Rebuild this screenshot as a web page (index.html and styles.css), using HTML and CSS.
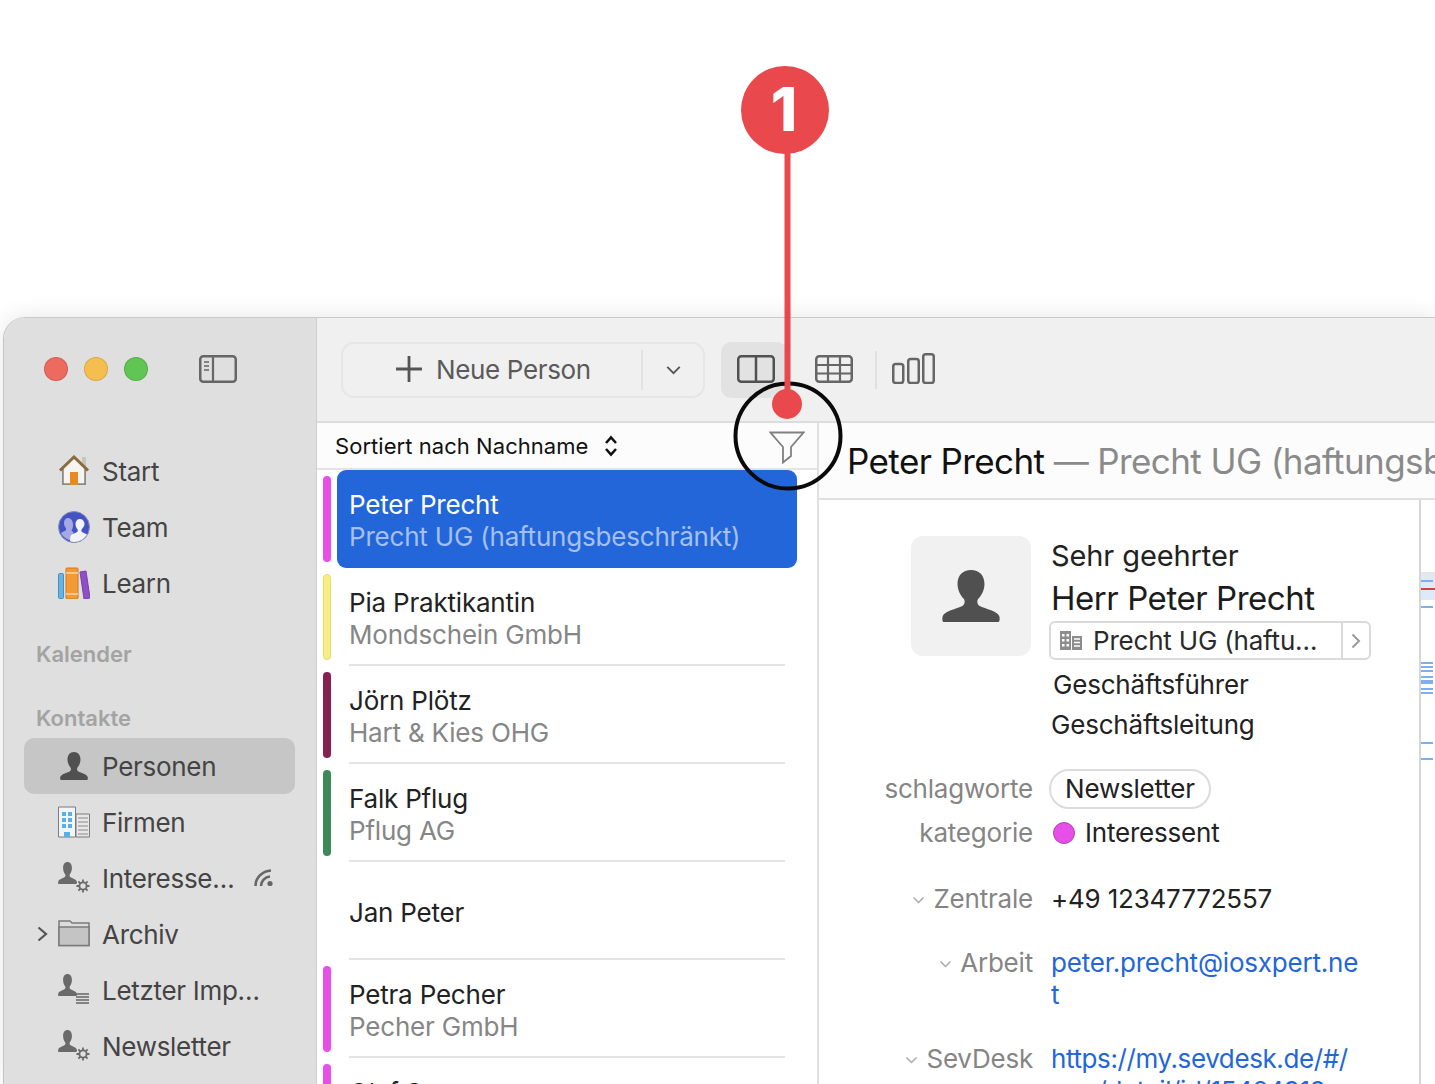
FILE: index.html
```html
<!DOCTYPE html>
<html lang="de">
<head>
<meta charset="utf-8">
<title>Personen</title>
<link rel="stylesheet" href="styles.css">
</head>
<body>
<svg class="defs" width="0" height="0">
  <symbol id="person" viewBox="0 0 28 28" preserveAspectRatio="none">
    <path d="M14 0c-4 0-6.500 3-6.500 7.500 0 3 1.300 6 3 8 .7 1 .6 3-.5 3.700C7 21 1 22 .3 25c-.2 1-.3 3 .7 3h26c1 0 .9-2 .7-3-.7-3-6.700-4-9.700-5.800-1.100-.7-1.200-2.700-.5-3.700 1.700-2 3-5 3-8C20.500 3 18 0 14 0z"/>
  </symbol>
  <symbol id="gear" viewBox="0 0 14 14">
    <circle cx="7" cy="7" r="3.600" fill="none" stroke="currentColor" stroke-width="1.800"/>
    <path d="M7 .5v2.600M7 10.900v2.600M.5 7h2.600M10.900 7h2.600M2.400 2.400l1.900 1.900M9.700 9.700l1.900 1.900M11.600 2.400L9.700 4.300M4.300 9.700l-1.900 1.900" stroke="currentColor" stroke-width="1.800" fill="none"/>
  </symbol>
  <symbol id="chev" viewBox="0 0 12 8">
    <path d="M1 1.500l5 5 5-5" fill="none" stroke="currentColor" stroke-width="1.500"/>
  </symbol>
</svg>

<div class="window">
  <aside class="sidebar">
    <div class="titlebar">
      <span class="light red"></span><span class="light yellow"></span><span class="light green"></span>
      <svg class="side-toggle" viewBox="0 0 38 28"><rect x="1.250" y="1.250" width="35.500" height="25.500" rx="3" fill="none" stroke="#666" stroke-width="2.500"/><path d="M14 1v26" stroke="#666" stroke-width="2.200"/><path d="M5 7h5M5 11h5M5 15h5" stroke="#666" stroke-width="1.600"/></svg>
    </div>
    <nav class="top-nav">
      <div class="nav-item"><span class="slot"></span>
        <svg class="nav-icon" viewBox="0 0 32 32"><path d="M24 2h4v12l-4-3z" fill="#c9c4bc"/><path d="M5 13L16 3l11 10v17H5z" fill="#f6f4f0"/><path d="M4 30V14h1.800v14.200h20.400V14H28v16z" fill="#8a8a8a"/><path d="M12 17h8v13h-8z" fill="#e58a25"/><path d="M2 15.500L16 2l14 13.500" fill="none" stroke="#8b6a3e" stroke-width="3"/></svg>
        <span class="nav-label">Start</span></div>
      <div class="nav-item"><span class="slot"></span>
        <svg class="nav-icon" viewBox="0 0 32 32"><circle cx="16" cy="16" r="15.500" fill="#4453c4" stroke="#8b8fb5" stroke-width="1"/><path d="M10 7c-2.500 0-4 2-4 5 0 2 .8 3.800 1.800 5 .5.700.4 2-.3 2.400-1.500.9-3.500 1.600-4.500 2.600 2 4 6 7 11 7.500 1-2 2-6 1.500-8-.4-.8-1.500-1.400-2-2 1-1.400 1.500-3.200 1.500-5.500C15 9 12.500 7 10 7z" fill="#a5a9e3"/><path d="M22 8c-2.700 0-4.500 2-4.500 5 0 2.200.9 4 2 5.300.5.700.4 2.200-.3 2.700-2 1.200-5 2-6.700 3.700L12 30c1.300.6 2.600 1 4 1 5.500 0 10.500-3 13-7.500-1.500-1-3.500-1.800-5-2.500-.7-.5-.8-2-.3-2.700 1.100-1.300 2.800-3 2.800-5.300 0-3-2-5-4.500-5z" fill="#f4f4f6"/></svg>
        <span class="nav-label">Team</span></div>
      <div class="nav-item"><span class="slot"></span>
        <svg class="nav-icon" viewBox="0 0 32 32"><rect x="0.500" y="6.500" width="5" height="25" rx="1" fill="#62b5e5" stroke="#4b8fc0"/><rect x="8" y="1" width="12" height="31" rx="1" fill="#f39a34" stroke="#c97a22"/><path d="M8 6h12M8 27h12" stroke="#f8d9a8" stroke-width="1.500"/><path d="M22 5l6-1 4 27-6 1z" fill="#8f4fc9" stroke="#7a3fb0"/></svg>
        <span class="nav-label">Learn</span></div>
    </nav>

    <div class="section first">Kalender</div>
    <div class="section second">Kontakte</div>

    <nav class="contacts-nav">
      <div class="nav-item selected"><span class="slot"></span>
        <span class="nav-icon composite"><svg class="person-main"><use href="#person"/></svg></span>
        <span class="nav-label">Personen</span></div>
      <div class="nav-item"><span class="slot"></span>
        <svg class="nav-icon" viewBox="0 0 32 32"><path d="M.5 1h17v30H.5z" fill="#f2f5f8" stroke="#7b7b7b"/><path d="M18 8h13.500v23H18z" fill="#e7e7e7" stroke="#7b7b7b"/><path d="M4 6h4v4H4zM10 6h4v4h-4zM4 12h4v4H4zM10 12h4v4h-4zM4 18h4v4H4zM10 18h4v4h-4z" fill="#58b0ea"/><path d="M6 26h6v5H6z" fill="#58b0ea"/><path d="M20 12h10M20 16h10M20 20h10M20 24h10M20 28h10" stroke="#a9a9a9" stroke-width="1.500"/></svg>
        <span class="nav-label">Firmen</span></div>
      <div class="nav-item"><span class="slot"></span>
        <span class="nav-icon composite"><svg class="mini-person"><use href="#person"/></svg><svg class="mini-gear"><use href="#gear"/></svg></span>
        <span class="nav-label">Interesse…</span>
        <svg class="feed" viewBox="0 0 20 18"><circle cx="16" cy="14.500" r="2.600" fill="#666"/><path d="M1.500 17C1.500 9 8 2 17 1.500M7 17c0-5 4-9 9-9.500" fill="none" stroke="#666" stroke-width="2.600"/></svg></div>
      <div class="nav-item"><span class="slot"><svg class="disclosure" viewBox="0 0 11 16"><path d="M1.500 1.500L9 8l-7.500 6.500" fill="none" stroke="#555" stroke-width="2.200"/></svg></span>
        <svg class="nav-icon" viewBox="0 0 32 32"><path d="M1 27.500V3h11l2 2h17v22.500z" fill="#dcdcdc" stroke="#7b7b7b" stroke-width="1.500"/><path d="M1 9h30v18.500H1z" fill="#c4c4c4" stroke="#7b7b7b" stroke-width="1.500"/></svg>
        <span class="nav-label">Archiv</span></div>
      <div class="nav-item"><span class="slot"></span>
        <span class="nav-icon composite"><svg class="mini-person"><use href="#person"/></svg><svg class="mini-list" viewBox="0 0 13 11"><path d="M0 1h13M0 4h13M0 7h13M0 10h13" stroke="#666" stroke-width="1.300"/></svg></span>
        <span class="nav-label">Letzter Imp…</span></div>
      <div class="nav-item"><span class="slot"></span>
        <span class="nav-icon composite"><svg class="mini-person"><use href="#person"/></svg><svg class="mini-gear"><use href="#gear"/></svg></span>
        <span class="nav-label">Newsletter</span></div>
    </nav>
  </aside>

  <div class="main">
    <header class="toolbar">
      <div class="split">
        <div class="split-main">
          <svg class="plus" viewBox="0 0 28 28"><path d="M14 1v26M1 14h26" stroke="#555" stroke-width="2.800"/></svg>
          <span>Neue Person</span>
        </div>
        <div class="split-arrow"><svg class="split-chev"><use href="#chev"/></svg></div>
      </div>
      <div class="view-active">
        <svg class="view-icon" viewBox="0 0 38 28"><rect x="1.250" y="1.250" width="35.500" height="25.500" rx="3" fill="none" stroke="#505050" stroke-width="2.500"/><path d="M19 1v26" stroke="#505050" stroke-width="2.500"/></svg>
      </div>
      <svg class="view-icon grid-icon" viewBox="0 0 38 28"><rect x="1.250" y="1.250" width="35.500" height="25.500" rx="3" fill="none" stroke="#666" stroke-width="2.500"/><path d="M1 10h36M1 18.500h36M13 1v26M25 1v26" stroke="#666" stroke-width="2.200"/></svg>
      <span class="tool-sep"></span>
      <svg class="bars-icon" viewBox="0 0 43 31"><rect x="1.250" y="11" width="10" height="19" rx="2.500" fill="none" stroke="#666" stroke-width="2.500"/><rect x="16.250" y="6" width="10.500" height="24" rx="2.500" fill="none" stroke="#666" stroke-width="2.500"/><rect x="31.250" y="1.250" width="10.500" height="28.750" rx="2.500" fill="none" stroke="#666" stroke-width="2.500"/></svg>
    </header>

    <div class="content">
      <section class="list">
        <div class="sortbar">
          <span class="sort-text">Sortiert nach Nachname</span>
          <svg class="updown" viewBox="0 0 14 22"><path d="M2 8l5-5.500L12 8M2 14l5 5.500 5-5.500" fill="none" stroke="#111" stroke-width="2.600"/></svg>
          <svg class="filter" viewBox="0 0 36 33"><path d="M1.500 1.500h33L22 16v9l-8 6.500V16z" fill="none" stroke="#808080" stroke-width="1.800"/></svg>
        </div>

        <div class="row active">
          <span class="stripe pink"></span>
          <div class="card"><div class="row-name">Peter Precht</div><div class="row-company">Precht UG (haftungsbeschränkt)</div></div>
        </div>
        <div class="row">
          <span class="stripe yellow-s"></span>
          <div class="card"><div class="row-name">Pia Praktikantin</div><div class="row-company">Mondschein GmbH</div></div>
        </div>
        <div class="row">
          <span class="stripe wine"></span>
          <div class="card"><div class="row-name">Jörn Plötz</div><div class="row-company">Hart &amp; Kies OHG</div></div>
        </div>
        <div class="row">
          <span class="stripe forest"></span>
          <div class="card"><div class="row-name">Falk Pflug</div><div class="row-company">Pflug AG</div></div>
        </div>
        <div class="row">
          <span class="stripe none"></span>
          <div class="card single"><div class="row-name">Jan Peter</div></div>
        </div>
        <div class="row">
          <span class="stripe pink"></span>
          <div class="card"><div class="row-name">Petra Pecher</div><div class="row-company">Pecher GmbH</div></div>
        </div>
        <div class="row">
          <span class="stripe pink"></span>
          <div class="card"><div class="row-name">Olaf Sommer</div><div class="row-company">Sommer KG</div></div>
        </div>
      </section>

      <section class="detail">
        <div class="detail-title"><span class="title-name">Peter Precht</span> <span class="title-rest">— Precht UG (haftungsbeschränkt)</span></div>
        <div class="detail-body">
          <div class="detail-scroll">
            <div class="profile">
              <div class="avatar"><svg class="avatar-person"><use href="#person"/></svg></div>
              <div class="profile-text">
                <div class="salutation">Sehr geehrter</div>
                <div class="fullname">Herr Peter Precht</div>
                <div class="company-box">
                  <div class="company-main">
                    <svg class="company-icon" viewBox="0 0 22 19"><path d="M0 0h11v19H0z" fill="#8d8d8d"/><path d="M2 3h2.500v2.500H2zM6.500 3H9v2.500H6.500zM2 8h2.500v2.500H2zM6.500 8H9v2.500H6.500zM2 13h2.500v2.500H2zM6.500 13H9v2.500H6.500z" fill="#fff"/><path d="M12 5h10v14H12z" fill="#8d8d8d"/><path d="M14 8h6M14 11.500h6M14 15h6" stroke="#fff" stroke-width="1.500"/></svg>
                    <span>Precht UG (haftu…</span>
                  </div>
                  <div class="company-go"><svg viewBox="0 0 10 16"><path d="M1.500 1.500L8 8l-6.500 6.500" fill="none" stroke="#999" stroke-width="2"/></svg></div>
                </div>
                <div class="jobtitle">Geschäftsführer</div>
                <div class="department">Geschäftsleitung</div>
              </div>
            </div>

            <div class="field tags">
              <div class="label">schlagworte</div>
              <div class="value"><span class="chip">Newsletter</span></div>
            </div>
            <div class="field cat">
              <div class="label">kategorie</div>
              <div class="value cat-value"><span class="cat-dot"></span>Interessent</div>
            </div>
            <div class="field phone">
              <div class="label"><svg class="label-chev"><use href="#chev"/></svg>Zentrale</div>
              <div class="value">+49 12347772557</div>
            </div>
            <div class="field mail">
              <div class="label"><svg class="label-chev"><use href="#chev"/></svg>Arbeit</div>
              <div class="value link">peter.precht@iosxpert.ne<br>t</div>
            </div>
            <div class="field web">
              <div class="label"><svg class="label-chev"><use href="#chev"/></svg>SevDesk</div>
              <div class="value link url">https://my.sevdesk.de/#/<br>crm/detail/id/15424919</div>
            </div>
          </div>
          <div class="minimap">
            <div class="mini-range"><i class="mark blue m8"></i><i class="mark red-m"></i></div>
            <i class="mark blue m6"></i>
            <i class="mark blue m54"></i>
            <i class="mark blue m2"></i>
            <i class="mark blue m2"></i>
            <i class="mark blue m4"></i>
            <i class="mark blue thick m2"></i>
            <i class="mark blue m4"></i>
            <i class="mark blue m2"></i>
            <i class="mark blue m48"></i>
            <i class="mark blue m14"></i>
          </div>
        </div>
      </section>
    </div>
  </div>
</div>

<svg class="annotation" viewBox="0 0 1435 1084" width="1435" height="1084">
  <circle cx="788" cy="436" r="52.500" fill="none" stroke="#0a0a0a" stroke-width="4"/>
  <rect x="784.500" y="150" width="6" height="250" fill="#e9484d"/>
  <circle cx="785" cy="110" r="44" fill="#e9484d"/>
  <circle cx="787" cy="404" r="15" fill="#e9484d"/>
  <text class="badge-num" x="784" y="131" text-anchor="middle">1</text>
</svg>
</body>
</html>
```

FILE: styles.css
```css
* { box-sizing: border-box; }

html, body {
  margin: 0;
  padding: 0;
  width: 1435px;
  height: 1084px;
  overflow: hidden;
  background: #fff;
}

body {
  position: relative;
  font-family: Inter, "Liberation Sans", sans-serif;
  padding: 317px 0 0 3px;
}

.defs { position: absolute; }

.window {
  display: flex;
  width: 1432px;
  height: 767px;
  overflow: hidden;
  border-top-left-radius: 22px;
  border-top: 1px solid #c9c9c9;
  border-left: 1px solid #c4c4c4;
  box-shadow: 0 -2px 22px rgba(0, 0, 0, .09);
  background: #fff;
  clip-path: inset(-30px 0 0 -3px round 22px 0 0 0);
}

/* Sidebar */
.sidebar {
  flex: 0 0 313px;
  background: #dfdfdf;
  border-right: 1px solid #cfcfcf;
  color: #444;
}

.titlebar {
  display: flex;
  align-items: center;
  height: 125px;
  padding: 0 0 23px 40px;
  gap: 16px;
}

.light { width: 24px; height: 24px; border-radius: 50%; border: 1px solid rgba(0, 0, 0, .12); }
.red { background: #ed6a5e; }
.yellow { background: #f5bf4f; }
.green { background: #61c554; }

.side-toggle { width: 38px; height: 28px; margin-left: 35px; }

.nav-item {
  display: flex;
  align-items: center;
  width: 271px;
  height: 56px;
  margin-left: 20px;
  border-radius: 10px;
}

.nav-item.selected { background: #c6c6c6; }

.slot {
  flex: 0 0 34px;
  display: flex;
  align-items: center;
  padding-left: 13px;
}

.disclosure { width: 11px; height: 16px; }

.nav-icon {
  flex: 0 0 32px;
  width: 32px;
  height: 32px;
  fill: #666;
  color: #666;
}

.composite { position: relative; display: block; }
.person-main { position: absolute; left: 2px; top: 2px; width: 28px; height: 28px; fill: #505050; }
.mini-person { position: absolute; left: 0; top: 0; width: 19px; height: 22px; fill: #6a6a6a; }
.mini-gear { position: absolute; right: 0; bottom: 1px; width: 14px; height: 14px; color: #6a6a6a; }
.mini-list { position: absolute; right: 1px; bottom: 2px; width: 13px; height: 11px; }

.nav-label {
  margin-left: 12px;
  margin-top: 1px;
  font-size: 26px;
  line-height: 32px;
  letter-spacing: -.3px;
  color: #444;
  white-space: nowrap;
}

.contacts-nav .nav-label { margin-top: 2px; }

.feed { width: 20px; height: 18px; margin-left: auto; margin-right: 21px; }

.section {
  margin-left: 32px;
  font-size: 22px;
  line-height: 30px;
  font-weight: 600;
  color: #a3a3a3;
}
.section.first { margin-top: 28px; }
.section.second { margin-top: 34px; margin-bottom: 5px; }

/* Main */
.main {
  flex: 1;
  min-width: 0;
  display: flex;
  flex-direction: column;
}

.toolbar {
  display: flex;
  align-items: center;
  flex: 0 0 105px;
  padding: 0 0 0 24px;
  background: #f0f0f0;
  border-bottom: 2px solid #dcdcdc;
}

.split {
  display: flex;
  align-items: stretch;
  width: 364px;
  height: 56px;
  margin-top: 1px;
  border: 2px solid #e6e6e6;
  border-radius: 13px;
}

.split-main {
  flex: 1;
  display: flex;
  align-items: center;
  padding: 0 0 2px 52px;
  gap: 13px;
  font-size: 26px;
  letter-spacing: -.35px;
  color: #5a5a5a;
}

.plus { width: 28px; height: 28px; }

.split-arrow {
  flex: 0 0 62px;
  display: flex;
  align-items: center;
  justify-content: center;
  margin: 6px 0;
  border-left: 2px solid #e3e3e3;
}

.split-chev { width: 15px; height: 10px; color: #555; }

.view-active {
  display: flex;
  align-items: center;
  width: 66px;
  height: 56px;
  margin-left: 16px;
  padding-left: 16px;
  background: #e2e2e2;
  border-radius: 10px;
}

.view-icon { flex: 0 0 38px; width: 38px; height: 28px; margin-top: -1px; }
.grid-icon { margin-left: 28px; }
.tool-sep { width: 2px; height: 38px; margin-left: 22px; background: #e0e0e0; }
.bars-icon { width: 43px; height: 31px; margin-left: 15px; margin-top: -3px; }

.content { flex: 1; min-height: 0; display: flex; }

/* List */
.list {
  flex: 0 0 502px;
  border-right: 2px solid #e0e0e0;
  background: #fff;
  overflow: hidden;
}

.sortbar {
  display: flex;
  align-items: center;
  height: 47px;
  padding-left: 18px;
  background: #fcfcfc;
  border-bottom: 2px solid #e4e4e4;
  font-size: 22px;
  color: #111;
}

.sort-text { letter-spacing: .05px; }

.updown { width: 14px; height: 22px; margin-left: 16px; }
.filter { width: 36px; height: 33px; margin-left: auto; margin-right: 12px; margin-top: 3px; }

.row { display: flex; height: 98px; }

.stripe {
  flex: 0 0 8px;
  height: 86px;
  margin: 6px 0 0 6px;
  border-radius: 4px;
}
.pink { background: #e84fe8; }
.yellow-s { background: #f7ef84; border: 1px solid #e6dd6a; }
.wine { background: #86214f; }
.forest { background: #3c8a57; }
.none { background: transparent; }

.card {
  width: 436px;
  height: 98px;
  margin-left: 18px;
  padding-top: 19px;
  border-bottom: 2px solid #e4e4e4;
}

.card.single { padding-top: 35px; }

.row.active .card {
  width: 460px;
  margin-left: 6px;
  padding-left: 12px;
  background: #2366d9;
  border-bottom: 0;
  border-radius: 9px;
}

.row-name { font-size: 26px; line-height: 32px; letter-spacing: -.2px; color: #222; white-space: nowrap; }
.row-company { font-size: 26px; line-height: 32px; letter-spacing: -.2px; color: #868686; white-space: nowrap; }
.active .row-name { color: #fff; }
.active .row-company { color: #a5c0f0; }

/* Detail */
.detail { flex: 1; min-width: 0; display: flex; flex-direction: column; overflow: hidden; }

.detail-title {
  flex: 0 0 77px;
  padding: 16px 0 0 28px;
  background: #fcfcfc;
  border-bottom: 2px solid #e0e0e0;
  font-size: 35px;
  line-height: 44px;
  letter-spacing: -.6px;
  white-space: nowrap;
}
.title-name { color: #111; }
.title-rest { color: #8a8a8a; }

.detail-body { flex: 1; min-height: 0; display: flex; }

.detail-scroll {
  flex: 0 0 602px;
  height: 600px;
  border-right: 2px solid #d6d6d6;
  overflow: hidden;
}

.profile { display: flex; padding: 36px 0 0 92px; }

.avatar {
  display: flex;
  align-items: center;
  justify-content: center;
  flex: 0 0 120px;
  height: 120px;
  background: #f1f1f1;
  border-radius: 12px;
}

.avatar-person { width: 58px; height: 52px; fill: #505050; }

.profile-text { margin-left: 18px; color: #222; }

.salutation { height: 42px; padding-left: 2px; font-size: 29px; line-height: 40px; letter-spacing: -.1px; }
.fullname { height: 43px; padding-left: 2px; font-size: 33px; line-height: 40px; letter-spacing: -.45px; color: #1c1c1c; white-space: nowrap; }

.company-box {
  display: flex;
  width: 322px;
  height: 39px;
  border: 2px solid #dadada;
  border-radius: 6px;
  font-size: 26px;
  letter-spacing: -.2px;
  color: #2a2a2a;
}

.company-main {
  flex: 1;
  display: flex;
  align-items: center;
  gap: 11px;
  padding-left: 9px;
  white-space: nowrap;
}

.company-icon { width: 22px; height: 19px; }

.company-go {
  flex: 0 0 28px;
  display: flex;
  align-items: center;
  justify-content: center;
  border-left: 2px solid #dadada;
}
.company-go svg { width: 10px; height: 16px; }

.jobtitle { margin-top: 5px; padding-left: 4px; font-size: 26px; line-height: 40px; letter-spacing: -.2px; }
.department { padding-left: 2px; font-size: 26px; line-height: 40px; letter-spacing: -.2px; }

.field {
  display: grid;
  grid-template-columns: 214px 1fr;
  column-gap: 18px;
  font-size: 26px;
  line-height: 32px;
  letter-spacing: -.2px;
}

.label { display: flex; align-items: center; justify-content: flex-end; height: 32px; color: #858585; white-space: nowrap; }
.value { color: #222; white-space: nowrap; }
.link { color: #2366d9; }
.url { letter-spacing: -.4px; }

.label-chev { width: 13px; height: 8px; margin-right: 8px; margin-top: 2px; color: #aaa; }

.tags { margin-top: 23px; height: 42px; align-items: center; }
.cat { height: 46px; align-items: center; }
.phone { margin-top: 27px; }
.mail { margin-top: 32px; }
.web { margin-top: 32px; }

.chip {
  display: inline-block;
  height: 40px;
  padding: 2px 14px;
  border: 2px solid #dcdcdc;
  border-radius: 20px;
  line-height: 32px;
  margin-left: -2px;
}

.cat-value { display: flex; align-items: center; gap: 10px; }
.cat-dot {
  width: 22px;
  height: 22px;
  margin-left: 2px;
  border-radius: 50%;
  background: #e84fe8;
  border: 1px solid #b23db2;
}

/* Overview marks */
.minimap { flex: 1; display: flex; flex-direction: column; align-items: flex-start; padding-top: 72px; }
.mini-range {
  align-self: stretch;
  height: 28px;
  background: #dfe9f8;
  border-top: 2px solid #e6e6e6;
  overflow: visible;
}
.mark { display: block; width: 12px; height: 2px; background: #7fb0ee; }
.thick { height: 4px; }
.m8 { margin-top: 6px; }
.red-m { width: 14px; margin-top: 6px; background: #d9433f; }
.m6 { margin-top: 6px; }
.m54 { margin-top: 54px; }
.m2 { margin-top: 2px; }
.m4 { margin-top: 4px; }
.m48 { margin-top: 48px; }
.m14 { margin-top: 14px; }

/* Annotation overlay */
.annotation { position: absolute; left: 0; top: 0; pointer-events: none; }
.badge-num { font-family: Inter, "Liberation Sans", sans-serif; font-size: 60px; font-weight: 800; fill: #fff; }
```
